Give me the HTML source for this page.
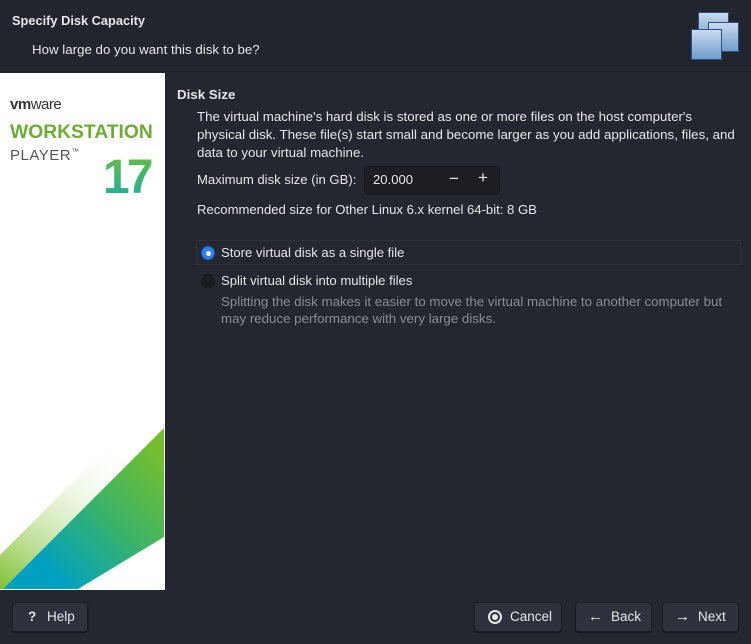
<!DOCTYPE html>
<html><head><meta charset="utf-8"><style>
*{margin:0;padding:0;box-sizing:border-box}
body{width:751px;height:644px;background:#242730;font-family:"Liberation Sans","DejaVu Sans",sans-serif;color:#e6e6e6;position:relative;overflow:hidden;font-size:13.1px}
.hdr{position:absolute;left:0;top:0;width:751px;height:72px;background:#22252e;border-bottom:1px solid #1d1f26}
.abs{position:absolute;white-space:nowrap}
.btn{position:absolute;top:602px;height:30px;background:#2f323c;border:1px solid #1b1d23;border-radius:4px;color:#e6e6e6;font-size:13.5px;line-height:28px;box-shadow:0 1px 1px #15171c}
.btn span{position:absolute;top:0}
</style></head><body>
<div class="hdr"></div>
<div class="abs" style="left:12px;top:13px;font-weight:bold;font-size:12.8px">Specify Disk Capacity</div>
<div class="abs" style="left:32px;top:42px;font-size:13.3px">How large do you want this disk to be?</div>
<svg class="abs" style="left:688px;top:10px" width="52" height="52" viewBox="0 0 52 52">
<defs><linearGradient id="bx" x1="0" y1="0" x2="0" y2="1"><stop offset="0" stop-color="#c9dcef"/><stop offset="1" stop-color="#6d9ccc"/></linearGradient></defs>
<rect x="10.5" y="2.5" width="30" height="29" fill="url(#bx)" stroke="#2f4f80"/>
<rect x="20.5" y="12.5" width="30" height="29" fill="url(#bx)" stroke="#2f4f80"/>
<rect x="3.5" y="19.5" width="30" height="30" fill="url(#bx)" stroke="#2f4f80"/>
</svg>
<svg class="abs" style="left:0;top:73px" width="165" height="517" viewBox="0 73 165 517">
<defs>
<linearGradient id="g1" x1="0" y1="1" x2="1" y2="0"><stop offset="0.2" stop-color="#00a0c0"/><stop offset="0.55" stop-color="#3ab36a"/><stop offset="0.9" stop-color="#74be2e"/></linearGradient>
<linearGradient id="g2" x1="0" y1="1" x2="0.6" y2="0"><stop offset="0" stop-color="#7ec030"/><stop offset="1" stop-color="#ffffff" stop-opacity="0"/></linearGradient>
<linearGradient id="g17" x1="0" y1="0" x2="0" y2="1"><stop offset="0" stop-color="#6cbd3a"/><stop offset="1" stop-color="#10b0a8"/></linearGradient>
</defs>
<rect x="0" y="73" width="165" height="517" fill="#fff"/>
<polygon points="0,555 120,435 164,428 3,589 0,589" fill="url(#g2)"/>
<polygon points="164,428 164,537 78,589 3,589" fill="url(#g1)"/>
<text x="10" y="109" font-family="Liberation Sans" font-weight="bold" font-size="15" fill="#333" letter-spacing="-0.5">vm<tspan font-weight="normal">ware</tspan></text>
<text x="10" y="138" font-family="Liberation Sans" font-weight="bold" font-size="19.3" fill="#6cae35">WORKSTATION</text>
<text x="10" y="160" font-family="Liberation Sans" font-size="15" fill="#555" letter-spacing="0.5">PLAYER<tspan font-size="8" dy="-6">™</tspan></text>
<text x="103" y="193" font-family="Liberation Sans" font-weight="bold" font-size="48" fill="url(#g17)" letter-spacing="-3">17</text>
</svg>
<div class="abs" style="left:177px;top:87px;font-weight:bold;font-size:13.3px">Disk Size</div>
<div class="abs" style="left:197px;top:108px;line-height:18px;font-size:13.3px">The virtual machine's hard disk is stored as one or more files on the host computer's<br>physical disk. These file(s) start small and become larger as you add applications, files, and<br>data to your virtual machine.</div>
<div class="abs" style="left:197px;top:172px">Maximum disk size (in GB):</div>
<div class="abs" style="left:364px;top:166px;width:136px;height:29px;background:#1c1e24;border:1px solid #14161a;border-radius:4px"></div>
<div class="abs" style="left:373px;top:172px">20.000</div>
<div class="abs" style="left:449px;top:169px;font-size:17px">−</div>
<div class="abs" style="left:478px;top:168px;font-size:17px">+</div>
<div class="abs" style="left:197px;top:202px">Recommended size for Other Linux 6.x kernel 64-bit: 8 GB</div>
<div class="abs" style="left:196px;top:240px;width:545px;height:25px;border:1px solid #30333c;border-radius:2px"></div>
<div class="abs" style="left:201px;top:246px;width:14px;height:14px;border-radius:50%;background:#2f7ff0;border:1px solid #1d5fc0"><div style="position:absolute;left:3.5px;top:3.5px;width:5px;height:5px;border-radius:50%;background:#fff"></div></div>
<div class="abs" style="left:221px;top:245px">Store virtual disk as a single file</div>
<div class="abs" style="left:201px;top:274px;width:14px;height:14px;border-radius:50%;background:#1c1e24;border:1px solid #15171b"></div>
<div class="abs" style="left:221px;top:273px">Split virtual disk into multiple files</div>
<div class="abs" style="left:221px;top:293px;line-height:17px;color:#8a8d95;font-size:13.3px">Splitting the disk makes it easier to move the virtual machine to another computer but<br>may reduce performance with very large disks.</div>
<div class="btn" style="left:12px;width:76px"><span style="left:15px;font-weight:bold">?</span><span style="left:34px">Help</span></div>
<div class="btn" style="left:474px;width:88px"><span style="left:13px;top:7px;width:14px;height:14px;border:2px solid #e6e6e6;border-radius:50%"></span><span style="left:17px;top:11px;width:6px;height:6px;background:#e6e6e6;border-radius:50%"></span><span style="left:35px">Cancel</span></div>
<div class="btn" style="left:575px;width:77px"><span style="left:12px;font-size:15px">←</span><span style="left:35px">Back</span></div>
<div class="btn" style="left:662px;width:77px"><span style="left:12px;font-size:15px">→</span><span style="left:35px">Next</span></div>
</body></html>
